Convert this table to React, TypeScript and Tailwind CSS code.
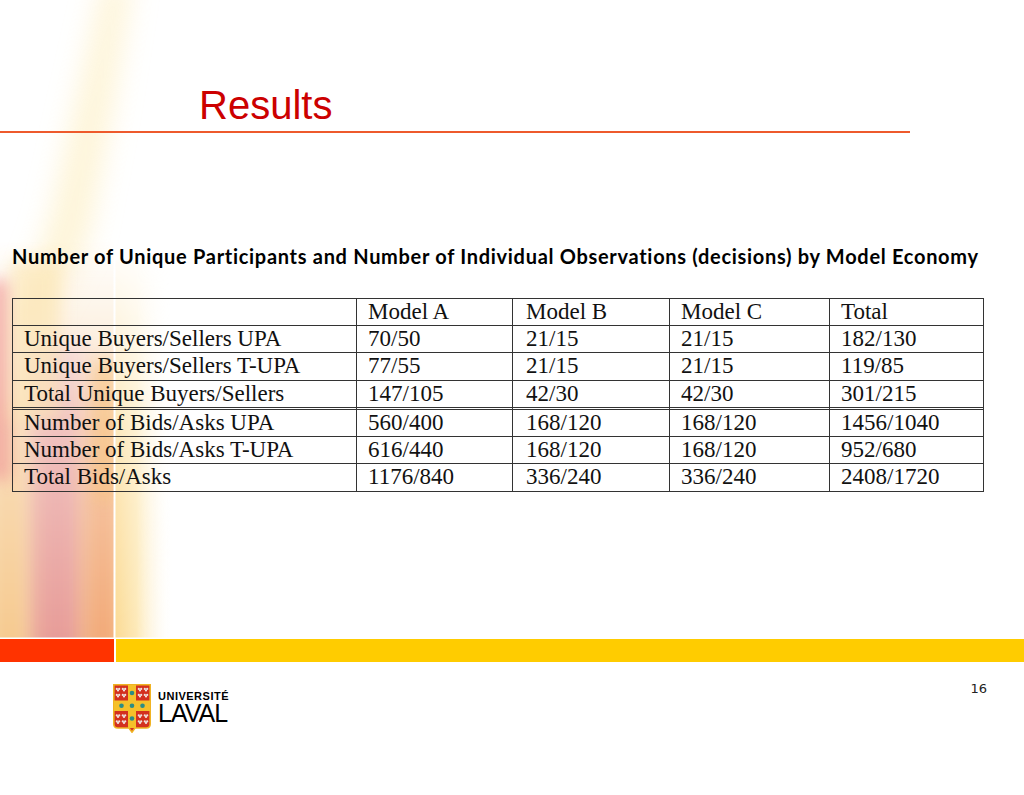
import React from 'react';

const header = ['', 'Model A', 'Model B', 'Model C', 'Total'];

const rows: { cells: string[]; h: string }[] = [
  { cells: ['Unique Buyers/Sellers UPA', '70/50', '21/15', '21/15', '182/130'], h: 'h-[27px] border-b' },
  { cells: ['Unique Buyers/Sellers T-UPA', '77/55', '21/15', '21/15', '119/85'], h: 'h-[28px] border-b' },
  { cells: ['Total Unique Buyers/Sellers', '147/105', '42/30', '42/30', '301/215'], h: 'h-[29px] border-b-[3px] border-double' },
  { cells: ['Number of Bids/Asks UPA', '560/400', '168/120', '168/120', '1456/1040'], h: 'h-[27px] border-b' },
  { cells: ['Number of Bids/Asks T-UPA', '616/440', '168/120', '168/120', '952/680'], h: 'h-[27px] border-b' },
  { cells: ['Total Bids/Asks', '1176/840', '336/240', '336/240', '2408/1720'], h: 'h-[28px] border-b' },
];

const pads = ['pl-[11px]', 'pl-[11px]', 'pl-[13px]', 'pl-[11px]', 'pl-[11px]'];

// soft flame artwork behind the slide
const Backdrop = () => (
  <svg className="absolute inset-0" width="1024" height="795" viewBox="0 0 1024 795">
    <defs>
      <filter id="b8" x="-50%" y="-50%" width="200%" height="200%">
        <feGaussianBlur stdDeviation="8" />
      </filter>
      <filter id="b12" x="-50%" y="-50%" width="200%" height="200%">
        <feGaussianBlur stdDeviation="12" />
      </filter>
      <filter id="b14" x="-50%" y="-50%" width="200%" height="200%">
        <feGaussianBlur stdDeviation="14" />
      </filter>
      <clipPath id="leftCol">
        <rect x="0" y="0" width="113.5" height="637.5" />
      </clipPath>
      <clipPath id="rightCol">
        <rect x="115.5" y="0" width="200" height="637.5" />
      </clipPath>
      <linearGradient id="fadeIn" x1="0" y1="0" x2="0" y2="1">
        <stop offset="0" stopColor="#fff" stopOpacity="0" />
        <stop offset="0.45" stopColor="#fff" stopOpacity="0.6" />
        <stop offset="1" stopColor="#fff" stopOpacity="1" />
      </linearGradient>
      <mask id="vmask">
        <rect x="0" y="240" width="300" height="400" fill="url(#fadeIn)" />
      </mask>
      <linearGradient id="rightFade" x1="0" y1="0" x2="1" y2="0">
        <stop offset="0" stopColor="#fbd88e" />
        <stop offset="0.4" stopColor="#fde9b8" />
        <stop offset="1" stopColor="#fff" stopOpacity="0" />
      </linearGradient>
    </defs>

    {/* faint streak from the top */}
    <polygon points="104,-20 132,-20 112,110 88,240 40,330 10,330 50,220" fill="#fdecb8" opacity="0.55" filter="url(#b14)" />

    <g clipPath="url(#leftCol)">
      <g mask="url(#vmask)">
        <rect x="-20" y="240" width="150" height="420" fill="#f7d3a2" />
        <rect x="30" y="340" width="55" height="340" fill="#e79b98" filter="url(#b12)" />
        <rect x="88" y="360" width="30" height="300" fill="#f1a06e" filter="url(#b12)" />
        <rect x="-4" y="400" width="26" height="260" fill="#f6c98e" filter="url(#b8)" />
      </g>
      <rect x="-10" y="280" width="20" height="200" fill="#f09a9a" opacity="0.75" filter="url(#b8)" />
      <rect x="10" y="260" width="50" height="160" fill="#fce6b4" opacity="0.6" filter="url(#b8)" />
      <rect x="95" y="360" width="20" height="140" fill="#f8c878" opacity="0.5" filter="url(#b8)" />
    </g>

    <g clipPath="url(#rightCol)" mask="url(#vmask)">
      <rect x="112" y="260" width="62" height="400" fill="url(#rightFade)" />
    </g>
  </svg>
);

const Crest = () => (
  <svg width="38" height="49" viewBox="0 0 38 49">
    <path d="M0.8,0.8 H37.2 V40 Q37.2,44 33.2,44 H22 L19,48.2 L16,44 H4.8 Q0.8,44 0.8,40 Z" fill="#d3301f" stroke="#f0b323" strokeWidth="1.6" />
    <rect x="15" y="1" width="8" height="43" fill="#f5c02a" />
    <rect x="1" y="16.5" width="36" height="10.5" fill="#f5c02a" />
    {[[19, 9], [8.5, 21.8], [19, 21.8], [29.5, 21.8], [19, 34.5]].map(([cx, cy], i) => (
      <circle key={i} cx={cx} cy={cy} r="2.3" fill="#2b8c86" />
    ))}
    {[
      [5, 5.5], [11, 5.5], [5, 11.5], [11, 11.5],
      [27, 5.5], [33, 5.5], [27, 11.5], [33, 11.5],
      [5, 32], [11, 32], [5, 38], [11, 38],
      [27, 32], [33, 32], [27, 38], [33, 38],
    ].map(([cx, cy], i) => (
      <g key={i} fill="#efe4e0">
        <circle cx={cx - 1.2} cy={cy - 0.6} r="1.1" />
        <circle cx={cx + 1.2} cy={cy - 0.6} r="1.1" />
        <circle cx={cx} cy={cy + 0.9} r="1.1" />
      </g>
    ))}
  </svg>
);

export default function App() {
  return (
    <div className="relative w-[1024px] h-[795px] overflow-hidden bg-white">
      <Backdrop />

      <div className="relative flex flex-col">
        <div className="h-[131px] pl-[199px] pt-[85px]">
          <h1 className="text-[40px] leading-none text-[#cc0000] font-['Liberation_Sans',Arial,sans-serif]">Results</h1>
        </div>
        <div className="h-[2px] w-[910px] bg-[#ee5a2c]" />

        <p className="mt-[112px] pl-[12px] text-[20px] leading-[22px] tracking-[0.7px] font-bold text-black font-['Lato',sans-serif] whitespace-nowrap">
          Number of Unique Participants and Number of Individual Observations (decisions) by Model Economy
        </p>

        {/* table */}
        <div className="mt-[31px] ml-[12px] w-fit grid grid-cols-[344px_156px_157px_160px_154px] border-l border-t border-[#333] font-['Liberation_Serif','Times_New_Roman',serif] text-[23px] leading-[26px] text-[#111]">
          {header.map((c, i) => (
            <div key={i} className={`h-[27px] border-r border-b border-[#333] whitespace-nowrap ${pads[i]}`}>{c}</div>
          ))}
          {rows.map((r, ri) =>
            r.cells.map((c, i) => (
              <div key={`${ri}-${i}`} className={`border-r border-[#333] whitespace-nowrap ${r.h} ${pads[i]}`}>{c}</div>
            ))
          )}
        </div>

        {/* bottom bars */}
        <div className="mt-[147px] h-[23px] flex gap-[2px]">
          <div className="w-[114px] bg-[#ff3300]" />
          <div className="flex-1 bg-[#ffcc00]" />
        </div>

        {/* footer */}
        <div className="mt-[20px] flex items-start justify-between pl-[113px] pr-[37px]">
          <div className="mt-[2px] flex items-start gap-[7px]">
            <Crest />
            <div className="flex flex-col pt-[7px] text-black font-['Liberation_Sans',Arial,sans-serif]">
              <span className="text-[11px] leading-none font-bold tracking-[0.5px]">UNIVERSITÉ</span>
              <span className="mt-[1px] text-[25px] leading-[20px] tracking-[-1px]">LAVAL</span>
            </div>
          </div>
          <span className="text-[13px] leading-none text-[#222] font-['DejaVu_Sans',Verdana,sans-serif]">16</span>
        </div>
      </div>
    </div>
  );
}
